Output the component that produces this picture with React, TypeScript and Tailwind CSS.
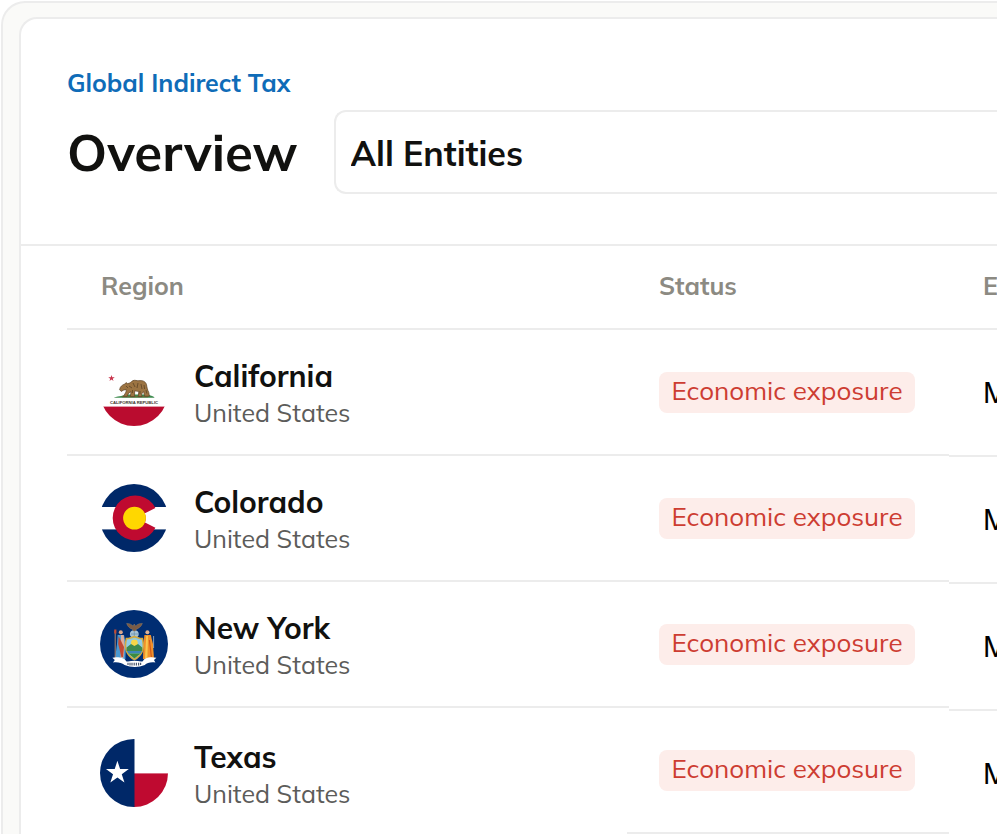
import type { ReactNode } from "react";

function star(cx: number, cy: number, r: number) {
  return Array.from({ length: 10 }, (_, i) => {
    const a = -Math.PI / 2 + (i * Math.PI) / 5;
    const d = i % 2 === 0 ? r : r * 0.382;
    return `${cx + d * Math.cos(a)},${cy + d * Math.sin(a)}`;
  }).join(" ");
}

function Flag({ id, title, children }: { id: string; title: string; children: ReactNode }) {
  return (
    <svg viewBox="0 0 68 68" role="img" aria-label={title} className="size-[68px] shrink-0">
      <clipPath id={id}>
        <circle cx="34" cy="34" r="34" />
      </clipPath>
      <g clipPath={`url(#${id})`}>{children}</g>
    </svg>
  );
}

function CaliforniaFlag() {
  return (
    <Flag id="flag-ca" title="California flag">
      <rect y="48.6" width="68" height="20" fill="#ba0c2f" />
      <polygon points={star(11.5, 20.3, 3.4)} fill="#c8324b" />
      <path d="M13.6 39.8 C20 38 23 37.8 27 36.6 H47 C51 37.6 54 38.4 54.6 39.8 Z" fill="#3d8a4e" />
      <path d="M22 38.8 H48" stroke="#7a5b2c" strokeWidth="0.8" />
      <path
        d="M19.6 31.7 C20 28.6 22.5 26.6 25 26 L26 24.6 L27.4 25.6 C30 25.6 31 23.7 33 22.6 C35 21.8 37 22.9 39 22.7 C42 22.2 45.5 23.1 46.5 26.6 C47 29.8 47.5 32 48.8 34.5 L49.4 38.2 H44.6 L43.6 33.5 L41.6 36 L42 38.6 H38.2 L38.8 33.4 C36.5 33.4 35.5 33 34.6 32.8 L34.6 38.6 H30.4 L31 33.7 L28.6 35.2 L27 38.4 H23.4 L26 34 L26.2 31.4 L23.4 32.2 L21.2 33.4 Z"
        fill="#9c7442"
        stroke="#5d4426"
        strokeWidth="0.7"
      />
      <path
        d="M29 28 L32 30 M33 25 L35 29 M38 25 L37 30 M41 26 L42 31 M44 27 L44.6 31 M26 28 L28 30 M32.5 32 V35 M40 33 V36 M46 32 L46.8 35.5"
        stroke="#5d4426"
        strokeWidth="0.8"
        fill="none"
      />
      <text
        x="34"
        y="46.2"
        textAnchor="middle"
        fontFamily="Liberation Sans Narrow, Liberation Sans, sans-serif"
        fontWeight="700"
        fontSize="4.2"
        fill="#3c332b"
      >
        CALIFORNIA REPUBLIC
      </text>
    </Flag>
  );
}

function ColoradoFlag() {
  return (
    <Flag id="flag-co" title="Colorado flag">
      <rect width="68" height="23" fill="#002868" />
      <rect y="45.4" width="68" height="23" fill="#002868" />
      <path d="M34.5 34.4 L55.4 24 A22.5 22.5 0 1 0 55.4 43.8 L45 38.4 A11.4 11.4 0 0 0 45 30 Z" fill="#bf0a30" />
      <circle cx="34.5" cy="34.1" r="11.4" fill="#ffd700" />
    </Flag>
  );
}

function NewYorkFlag() {
  return (
    <Flag id="flag-ny" title="New York flag">
      <rect width="68" height="68" fill="#002d72" />
      {/* eagle and globe */}
      <ellipse cx="34.3" cy="24" rx="4.4" ry="3.8" fill="#a9c4d6" />
      <path d="M31 24 H38 M34.3 20.5 V27" stroke="#5d86a5" strokeWidth="0.6" />
      <path
        d="M26.6 13.4 C30 13.2 32 15 33.2 16 L34.2 14 L35.6 16 C37 14.6 39 13.2 42.4 13.4 C41.2 16.6 38.6 18.4 36.4 19.2 L35.4 21 H33.4 L32.4 19.2 C29.6 18.4 27.8 16.6 26.6 13.4 Z"
        fill="#7a5b45"
        stroke="#a08a70"
        strokeWidth="0.4"
      />
      {/* left supporter */}
      <circle cx="20.8" cy="22.3" r="2" fill="#d9a689" />
      <path d="M17.6 25 H24 L26 34 L25.4 49 H15 L17 34 Z" fill="#4b9ad2" />
      <path d="M21 25 L23.6 25 L24.8 36 L23.4 48 L20.6 48 Z" fill="#dcae9c" />
      <path d="M18.6 26 L24 37 L23 47 L21.4 47 L18.2 34 Z" fill="#c24a34" />
      <path d="M15.2 21 V48" stroke="#c78c65" strokeWidth="0.9" />
      <path d="M14.2 19.6 H16.4 V23.4 H14.2 Z" fill="#c24a34" />
      {/* right supporter */}
      <circle cx="47.4" cy="22.3" r="2" fill="#e0b291" />
      <path d="M44.4 25 H50.8 L53 34 L54 49 H43 L43.4 34 Z" fill="#f0902a" />
      <path d="M46.2 26 L48 26 L47.4 48 H45 Z" fill="#f9c74e" />
      <path d="M49.4 30 L51.4 47" stroke="#cf5a1c" strokeWidth="1.2" />
      <path d="M53.6 26 V38" stroke="#b9cfe0" strokeWidth="0.7" />
      {/* shield */}
      <path
        d="M26.4 28.6 C29 28.8 31 27.4 34.4 26.6 C37.8 27.4 39.8 28.8 42.4 28.6 C44.2 36 44.4 44 34.4 49.6 C24.4 44 24.6 36 26.4 28.6 Z"
        fill="#8fcbe6"
        stroke="#d3aa3f"
        strokeWidth="1.6"
      />
      <circle cx="34.4" cy="33" r="3.4" fill="#f7d648" />
      <path d="M26.6 37.5 L31 34 L34.4 36 L38 34 L42.2 37.5 V41 H26.6 Z" fill="#3e8a4f" />
      <path d="M27 41 H42 L40.6 43.6 H28.4 Z" fill="#3d86b8" />
      <path d="M28.4 43.6 H40.6 L34.4 48.4 Z" fill="#3c8b3c" />
      {/* ribbon */}
      <path
        d="M12.4 47.8 C15 47 19 46.8 24 48.8 C26.6 50.4 25.4 52 28 51.4 C32 50.4 37 50.4 41 51.4 C43.6 52 42.4 50.4 45 48.8 C49 46.8 53 47 56.4 47.8 L54 50 L55.4 52.4 C50.6 51.8 47 52.6 44.8 55 C38.6 57.6 31 57.6 24.6 55 C21.4 52.6 18 51.8 13 52.4 L14.8 50 Z"
        fill="#fff"
      />
      <path
        d="M28 52.8 V55 M30 52.8 V55.4 M32 52.8 V55.6 M34.2 52.8 V55.6 M36.4 52.8 V55.6 M38.6 52.8 V55.4 M40.6 52.8 V55"
        stroke="#4b566c"
        strokeWidth="1.2"
      />
    </Flag>
  );
}

function TexasFlag() {
  return (
    <Flag id="flag-tx" title="Texas flag">
      <rect x="34" y="34.4" width="34" height="34" fill="#bf0a30" />
      <rect width="34.5" height="68" fill="#002868" />
      <polygon points={star(17.4, 33.8, 12)} fill="#fff" />
    </Flag>
  );
}

const regions = [
  { name: "California", country: "United States", flag: <CaliforniaFlag />, height: "h-[126px]" },
  { name: "Colorado", country: "United States", flag: <ColoradoFlag />, height: "h-[126px]" },
  { name: "New York", country: "United States", flag: <NewYorkFlag />, height: "h-[126px]" },
  { name: "Texas", country: "United States", flag: <TexasFlag />, height: "h-[131px]" },
];

const headCell = "h-[84px] border-b-2 border-[#ececec] pb-0.5 text-left text-[25px] leading-8 font-bold text-[#8c8a82]";

export default function App() {
  return (
    <div className="h-screen overflow-hidden bg-white pt-px pl-px font-['Mulish','Lato',sans-serif] text-[#11110f]">
      <div className="h-full rounded-tl-[24px] border-t-2 border-l-2 border-[#ececec] bg-[#fafaf8] pt-[14px] pl-4">
        <main className="h-full rounded-tl-[18px] border-t-2 border-l-2 border-[#ececec] bg-white">
          <header className="border-b-2 border-[#ececec] pt-12 pb-[50px] pl-[46px]">
            <a href="#tax" className="block text-[25px] leading-8 font-bold text-[#0f6cb8]">
              Global Indirect Tax
            </a>
            <div className="mt-[11px] flex items-center gap-9">
              <h1 className="text-[51px] leading-[64px] font-bold">Overview</h1>
              <select
                aria-label="Entities"
                className="h-[84px] min-w-0 flex-1 appearance-none rounded-l-xl border-2 border-r-0 border-[#ececec] bg-white pt-0.5 pl-[15px] text-[34px] font-bold"
              >
                <option>All Entities</option>
              </select>
            </div>
          </header>

          <div className="flex items-start pl-[46px]">
            <table className="w-[560px] shrink-0 border-separate border-spacing-0">
              <thead>
                <tr>
                  <th scope="col" className={`${headCell} pl-[34px]`}>Region</th>
                </tr>
              </thead>
              <tbody>
                {regions.map((r) => (
                  <tr key={r.name}>
                    <td className={`${r.height} border-b-2 border-[#ececec] p-0 pl-[33px]`}>
                      <div className="flex items-center gap-[26px]">
                        {r.flag}
                        <div className="pt-1">
                          <div className="text-[30px] leading-[38px] font-bold">{r.name}</div>
                          <div className="text-[25px] leading-9 text-[#5c5c5a]">{r.country}</div>
                        </div>
                      </div>
                    </td>
                  </tr>
                ))}
              </tbody>
            </table>

            <table className="w-[322px] shrink-0 border-separate border-spacing-0">
              <thead>
                <tr>
                  <th scope="col" className={`${headCell} pl-8`}>Status</th>
                </tr>
              </thead>
              <tbody>
                {regions.map((r) => (
                  <tr key={r.name}>
                    <td className="h-[126px] border-b-2 border-[#ececec] p-0 pl-8">
                      <span className="flex h-[41px] w-[256px] items-center justify-center rounded-lg bg-[#fdedea] pb-0.5 text-[26px] leading-8 text-[#cd3d32]">
                        Economic exposure
                      </span>
                    </td>
                  </tr>
                ))}
              </tbody>
            </table>

            <table className="min-w-0 flex-1 table-fixed border-separate border-spacing-0 overflow-hidden">
              <thead>
                <tr>
                  <th scope="col" className={`${headCell} pl-[34px]`}>E</th>
                </tr>
              </thead>
              <tbody>
                {regions.map((r) => (
                  <tr key={r.name}>
                    <td className="h-[127px] border-b-2 border-[#ececec] p-0 pl-[34px] font-['Inter',sans-serif] text-[28px] text-black">
                      M
                    </td>
                  </tr>
                ))}
              </tbody>
            </table>
          </div>
        </main>
      </div>
    </div>
  );
}
